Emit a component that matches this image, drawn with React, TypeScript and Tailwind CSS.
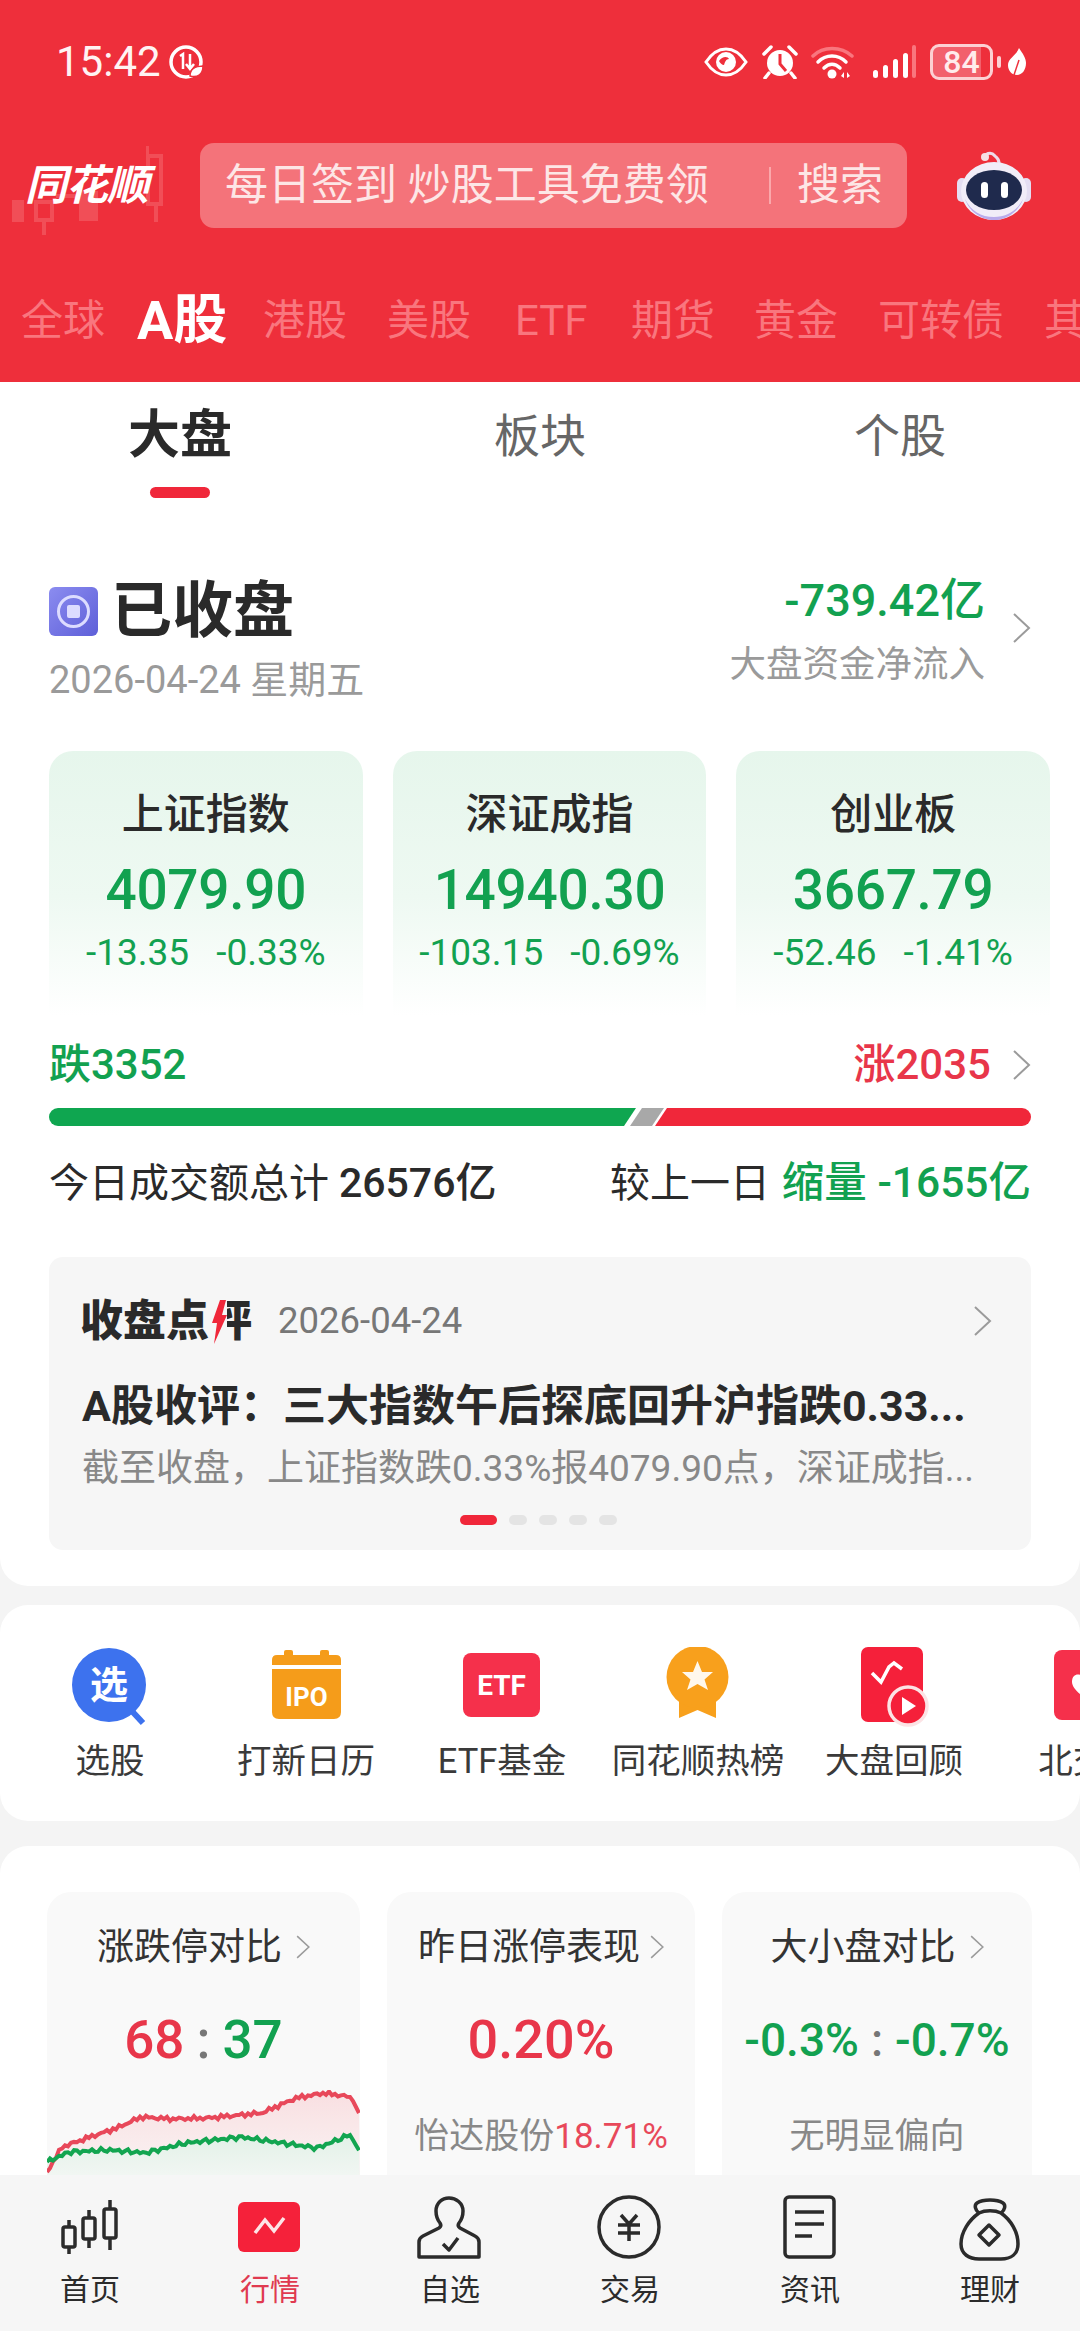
import React from "react";

const markets = [
  { label: "全球", cls: "w-[83px] mr-[33px]" },
  { label: "A股", cls: "w-[93px] mr-[33px] text-white font-bold text-[54px]" },
  { label: "港股", cls: "w-[84px] mr-[40px]" },
  { label: "美股", cls: "w-[83px] mr-[45px]" },
  { label: "ETF", cls: "w-[71px] mr-[45px]" },
  { label: "期货", cls: "w-[83px] mr-[40px]" },
  { label: "黄金", cls: "w-[84px] mr-[40px]" },
  { label: "可转债", cls: "w-[126px] mr-[40px]" },
  { label: "其他", cls: "w-[84px]" },
];

const indexes = [
  { name: "上证指数", value: "4079.90", diff: "-13.35", pct: "-0.33%" },
  { name: "深证成指", value: "14940.30", diff: "-103.15", pct: "-0.69%" },
  { name: "创业板", value: "3667.79", diff: "-52.46", pct: "-1.41%" },
];

const Chevron = ({ className }: { className: string }) => (
  <svg viewBox="0 0 18 30" className={className} fill="none" stroke="#9b9b9b" strokeWidth="2">
    <polyline points="1.500,1 16.500,15 1.500,29" />
  </svg>
);

const EyeIcon = () => (
  <svg viewBox="0 0 44 30" className="w-[44px] h-[30px]">
    <path d="M2 15 C10 3 17 2 22 2 C27 2 34 3 42 15 C34 27 27 28 22 28 C17 28 10 27 2 15 Z" fill="none" stroke="#fff" strokeWidth="3" />
    <circle cx="22" cy="15" r="10" fill="#fff" />
    <path d="M15 14 C18 9 24 9 25 12 C22 12 21 15 20 18 C18 18 16 16 15 14 Z" fill="#ee2f3b" />
  </svg>
);

const AlarmIcon = () => (
  <svg viewBox="0 0 36 34" className="w-[36px] h-[34px]">
    <circle cx="18" cy="18" r="13" fill="#fff" />
    <path d="M18 9 V19 L24 26" fill="none" stroke="#ee2f3b" strokeWidth="3" />
    <path d="M2 9 L9 2 M27 2 L34 9 M7 28 L3 33 M29 28 L33 33" stroke="#fff" strokeWidth="3.5" strokeLinecap="round" />
  </svg>
);

const WifiIcon = () => (
  <svg viewBox="0 0 44 34" className="w-[44px] h-[34px]" fill="none" strokeLinecap="round">
    <path d="M2 11 C12 1 30 1 41 11" stroke="#f9767e" strokeWidth="3.5" />
    <path d="M7 17 C15 9 27 9 35 17" stroke="#fff" strokeWidth="3.5" />
    <path d="M13 23 C18 18 24 18 29 23" stroke="#fff" strokeWidth="3.5" />
    <circle cx="21" cy="29" r="4.5" fill="#fff" />
    <path d="M30 31 L33 27 V33 Z M36 27 L39 31 L36 33 Z" fill="#fff" />
  </svg>
);

const SignalIcon = () => (
  <svg viewBox="0 0 44 34" className="w-[44px] h-[34px]">
    <rect x="0" y="25" width="5" height="8" rx="2.5" fill="#fff" />
    <rect x="10" y="20" width="5" height="13" rx="2.5" fill="#fff" />
    <rect x="20" y="14" width="5" height="19" rx="2.5" fill="#fff" />
    <rect x="30" y="8" width="5" height="25" rx="2.5" fill="#fff" />
    <rect x="39" y="0" width="4" height="33" rx="2" fill="#f9767e" />
  </svg>
);

const LeafIcon = () => (
  <svg viewBox="0 0 18 28" className="w-[18px] h-[28px]">
    <path d="M11 0 C15 6 18 10 18 15 C18 22 14 27 9 27 C4 27 0 23 0 17 C0 10 8 8 11 0 Z" fill="#fff" />
    <path d="M6 27 L11 12" stroke="#ee2f3b" strokeWidth="1.5" />
  </svg>
);

const RobotIcon = () => (
  <svg viewBox="0 0 74 70" className="w-[74px] h-[70px]">
    <path d="M28 9 C27 2 34 0 38 5 C40 7 42 8 42 12" fill="none" stroke="#eedcea" strokeWidth="3" />
    <circle cx="28" cy="6" r="4" fill="#f6dfe4" />
    <rect x="0" y="27" width="10" height="24" rx="5" fill="#e4def2" />
    <rect x="64" y="27" width="10" height="24" rx="5" fill="#e4def2" />
    <ellipse cx="37" cy="40" rx="33" ry="29" fill="#f1edf8" />
    <path d="M37 66 C50 66 60 60 66 48 C62 60 50 69 37 69 C24 69 12 60 8 48 C14 60 24 66 37 66 Z" fill="#b9abeb" />
    <ellipse cx="37" cy="39" rx="28" ry="20" fill="#1f2a4d" />
    <rect x="24" y="31" width="7" height="16" rx="3.5" fill="#fff" />
    <rect x="44" y="31" width="7" height="16" rx="3.5" fill="#fff" />
  </svg>
);

const shortcuts: { label: string; icon: React.ReactNode }[] = [
  {
    label: "选股",
    icon: (
      <>
        <path d="M60 62 L73 76" stroke="#3d72ee" strokeWidth="6" />
        <circle cx="39" cy="38" r="37" fill="#3d72ee" />
        <text x="39" y="51" textAnchor="middle" fontSize="38" fontWeight="700" fill="#fff">选</text>
      </>
    ),
  },
  {
    label: "打新日历",
    icon: (
      <>
        <rect x="18" y="3" width="9" height="10" rx="2" fill="#f59c1a" />
        <rect x="54" y="3" width="9" height="10" rx="2" fill="#f59c1a" />
        <path d="M6 18 V13 Q6 8 11 8 H70 Q75 8 75 13 V18 Z" fill="#f59c1a" />
        <path d="M6 22 H75 V65 Q75 72 68 72 H13 Q6 72 6 65 Z" fill="#f59c1a" />
        <text x="40.5" y="59" textAnchor="middle" fontSize="26" fontWeight="700" fill="#fff">IPO</text>
      </>
    ),
  },
  {
    label: "ETF基金",
    icon: (
      <>
        <rect x="1" y="6" width="77" height="64" rx="8" fill="#f5304b" />
        <text x="39.5" y="48" textAnchor="middle" fontSize="28" fontWeight="700" fill="#fff">ETF</text>
      </>
    ),
  },
  {
    label: "同花顺热榜",
    icon: (
      <>
        <path d="M21 48 V71 L39.5 63 L58 71 V48 Z" fill="#f8a01c" />
        <circle cx="39.5" cy="30" r="31" fill="#f8a01c" />
        <polygon
          points="39.5,14 44,25 55,25 46.500,32.500 50,43 39.500,37 29,43 32.500,32.500 24,25 35,25"
          fill="#fff8ec"
          strokeLinejoin="round"
        />
      </>
    ),
  },
  {
    label: "大盘回顾",
    icon: (
      <>
        <rect x="7" y="0" width="62" height="75" rx="7" fill="#f5203a" />
        <polyline points="18,26 27,35 35,20 40,16 48,22" fill="none" stroke="#fff" strokeWidth="3.5" />
        <circle cx="54" cy="59" r="19" fill="#f5203a" stroke="#fce3e5" strokeWidth="3.5" />
        <polygon points="48,50 48,68 62,59" fill="#fff" />
      </>
    ),
  },
  {
    label: "北交所",
    icon: (
      <>
        <rect x="4" y="3" width="72" height="70" rx="8" fill="#f5304b" />
        <path d="M22 35 C22 26 30 26 33 30 C36 26 44 26 44 35 C44 40 38 46 33 49 C28 46 22 40 22 35 Z" fill="#fff" />
      </>
    ),
  },
];

const navItems: { label: string; icon: React.ReactNode; active?: boolean }[] = [
  {
    label: "首页",
    icon: (
      <g fill="none" stroke="#2b2b2b" strokeWidth="3.500" strokeLinejoin="round">
        <rect x="8" y="35" width="12" height="20" rx="2" />
        <path d="M14 28 V35 M14 55 V62" />
        <rect x="28" y="26" width="12" height="21" rx="2" />
        <path d="M34 18 V26 M34 47 V56" />
        <rect x="49" y="17" width="12" height="29" rx="2" />
        <path d="M55 8 V17 M55 46 V58" />
      </g>
    ),
  },
  {
    label: "行情",
    active: true,
    icon: (
      <>
        <rect x="3" y="10" width="62" height="50" rx="6" fill="#f5213a" />
        <polyline points="20,41 30,28 39,39 49,26" fill="none" stroke="#fde4e6" strokeWidth="3.500" />
      </>
    ),
  },
  {
    label: "自选",
    icon: (
      <g fill="none" stroke="#2b2b2b" strokeWidth="3.500" strokeLinejoin="round">
        <path d="M4 65 V50 Q4 46 8 44 L24 36 Q27 34 25 31 Q21 26 21 19 C21 11 27 6 34 6 C41 6 48 11 48 19 Q48 26 44 31 Q42 34 45 36 L60 44 Q64 46 64 50 V65 Z" />
        <polyline points="28,52 34,58 43,46" />
      </g>
    ),
  },
  {
    label: "交易",
    icon: (
      <g fill="none" stroke="#2b2b2b" strokeWidth="3.500">
        <circle cx="34" cy="35" r="30" />
        <path d="M26 23 L34 32 L42 23 M23 33 H45 M23 41 H45 M34 32 V49" />
      </g>
    ),
  },
  {
    label: "资讯",
    icon: (
      <g fill="none" stroke="#2b2b2b" strokeWidth="3.500">
        <rect x="10" y="5" width="49" height="60" rx="4" />
        <path d="M20 20 H49 M20 32 H49 M20 44 H37" />
      </g>
    ),
  },
  {
    label: "理财",
    icon: (
      <g fill="none" stroke="#2b2b2b" strokeWidth="3.500" strokeLinejoin="round">
        <path d="M24 21 C20 18 19 13 22 11 C28 7 42 7 48 11 C51 13 50 18 46 21" />
        <path d="M24 21 C14 28 6 40 6 52 C6 62 14 67 24 67 H46 C56 67 63 62 63 52 C63 40 56 28 46 21 C40 18 30 18 24 21 Z" />
        <polygon points="34,33 44,43 34,53 24,43" />
      </g>
    ),
  },
];

const redAnchors = [
  [0, 82], [15, 57], [43, 47], [70, 38], [94, 27], [125, 29], [160, 28], [215, 23], [249, 8], [277, 3], [304, 7], [313, 25],
];
const greenAnchors = [
  [0, 72], [22, 62], [63, 60], [98, 63], [139, 53], [194, 47], [249, 55], [270, 58], [303, 45], [313, 62],
];

// interpolate the anchors and add a small fixed jitter so the line looks like a tick chart
const buildLine = (anchors: number[][], seed: number) => {
  const pts: string[] = [];
  for (let x = 0; x <= 313; x += 3) {
    let i = 0;
    while (i < anchors.length - 2 && anchors[i + 1][0] < x) i++;
    const [x0, y0] = anchors[i];
    const [x1, y1] = anchors[i + 1];
    const y = y0 + ((y1 - y0) * (x - x0)) / (x1 - x0);
    const jitter = x > 300 ? 0 : Math.sin(x * seed) * 1.6 + Math.sin(x * seed * 2.7) * 0.8;
    pts.push(`${x},${(y + jitter).toFixed(1)}`);
  }
  return pts.join(" ");
};

const MiniChart = () => {
  const red = buildLine(redAnchors, 0.93);
  const green = buildLine(greenAnchors, 1.37);
  return (
    <svg viewBox="0 0 313 100" className="w-[313px] h-[100px] block">
      <defs>
        <linearGradient id="redFill" x1="0" y1="0" x2="0" y2="1">
          <stop offset="0" stopColor="#f8c9cd" stopOpacity="0.55" />
          <stop offset="1" stopColor="#fbeeee" stopOpacity="0.4" />
        </linearGradient>
        <linearGradient id="greenFill" x1="0" y1="0" x2="0" y2="1">
          <stop offset="0" stopColor="#e2f1e7" />
          <stop offset="1" stopColor="#f7f8f7" />
        </linearGradient>
      </defs>
      <polygon points={`0,100 ${red} 313,100`} fill="url(#redFill)" />
      <polygon points={`0,100 ${green} 313,100`} fill="url(#greenFill)" />
      <polyline points={red} fill="none" stroke="#e8485a" strokeWidth="4" />
      <polyline points={green} fill="none" stroke="#12a550" strokeWidth="4" />
    </svg>
  );
};

export default function App() {
  return (
    <div className="w-[1080px] h-[2331px] overflow-hidden flex flex-col bg-[#f4f4f4] text-[#2a2a2a] font-[Roboto,'Noto_Sans_CJK_SC',sans-serif]">
      <header className="h-[382px] shrink-0 bg-[#ee2f3b] overflow-hidden">
        <div className="mt-[40px] h-[44px] pl-[56px] pr-[54px] flex items-center justify-between">
          <div className="flex items-center">
            <span className="text-[42px] leading-none text-[#fff3f3]">15:42</span>
            <svg viewBox="0 0 36 36" className="w-[36px] h-[36px] ml-[7px]">
              <circle cx="18" cy="18" r="15" fill="none" stroke="#fff" strokeWidth="3.500" />
              <path d="M12 12 L15 10 V25 M22 10 V24 M18 20 L22 25 L26 20" fill="none" stroke="#fff" strokeWidth="2.500" />
              <path d="M22 32 C22 25 28 22 35 22 C35 30 30 34 22 32 Z" fill="#fff" stroke="#ee2f3b" strokeWidth="1.500" />
            </svg>
          </div>
          <div className="flex items-center">
            <EyeIcon />
            <div className="ml-[14px]"><AlarmIcon /></div>
            <div className="ml-[13px]"><WifiIcon /></div>
            <div className="ml-[18px]"><SignalIcon /></div>
            <div className="ml-[13px] w-[63px] h-[36px] rounded-[9px] border-[3px] border-[#fcd0d3] bg-[linear-gradient(90deg,#f2606c_84%,transparent_84%)] flex items-center justify-center text-[32px] leading-none font-medium text-[#ffecec]">
              84
            </div>
            <div className="ml-[4px] w-[4px] h-[12px] rounded-[2px] bg-[#fcd0d3]" />
            <div className="ml-[7px]"><LeafIcon /></div>
          </div>
        </div>

        <div className="mt-[59px] h-[85px] flex items-center">
          <div className="relative w-[200px] h-[85px] shrink-0 flex items-center">
            <svg viewBox="0 0 170 105" className="absolute left-[10px] top-[-5px] w-[170px] h-[105px]">
              <g fill="#f14e57">
                <rect x="2" y="62" width="12" height="22" />
                <path d="M24 62 H44 V84 H36 V97 H32 V84 H24 Z M28 66 V80 H40 V66 Z" />
                <rect x="46" y="56" width="20" height="4" />
                <rect x="69" y="53" width="19" height="30" />
                <path d="M136 8 H139 V16 H153 V68 H148 V84 H144 V68 H136 Z M140 20 V64 H149 V20 Z" />
              </g>
            </svg>
            <span className="relative ml-[25px] text-[42px] leading-none font-bold italic text-[#fff] tracking-[-1px]">同花顺</span>
          </div>
          <div className="w-[707px] h-[85px] shrink-0 rounded-[14px] bg-[#f4737a] flex items-center text-[#fde6e6]">
            <span className="ml-[25px] w-[544px] text-[43px] leading-none whitespace-nowrap">每日签到 炒股工具免费领</span>
            <div className="w-[2px] h-[37px] bg-[#fba8ab]" />
            <span className="ml-[26px] text-[43px] leading-none whitespace-nowrap">搜索</span>
          </div>
          <div className="ml-[50px]"><RobotIcon /></div>
        </div>

        <div className="mt-[63px] h-[60px] pl-[21px] flex items-center whitespace-nowrap text-[42px] leading-none text-[#f9767e]">
          {markets.map((m) => (
            <span key={m.label} className={`shrink-0 ${m.cls}`}>
              {m.label}
            </span>
          ))}
        </div>
      </header>

      <main className="flex-1 min-h-0 overflow-hidden">
        <section className="bg-white rounded-b-[28px] pb-[36px]">
          <div className="grid grid-cols-3 pt-[24px]">
            <div className="flex flex-col items-center">
              <span className="h-[60px] flex items-center text-[52px] leading-none font-bold">大盘</span>
              <div className="mt-[21px] w-[60px] h-[11px] rounded-full bg-[#f0273a]" />
            </div>
            <div className="flex justify-center">
              <span className="h-[60px] flex items-center text-[46px] leading-none text-[#666]">板块</span>
            </div>
            <div className="flex justify-center">
              <span className="h-[60px] flex items-center text-[46px] leading-none text-[#666]">个股</span>
            </div>
          </div>

          <div className="mt-[72px] px-[49px] flex justify-between">
            <div>
              <div className="h-[82px] flex items-center">
                <svg viewBox="0 0 49 49" className="w-[49px] h-[49px]">
                  <defs>
                    <linearGradient id="closedBg" x1="0" y1="0" x2="1" y2="1">
                      <stop offset="0" stopColor="#8b8cf0" />
                      <stop offset="1" stopColor="#5e5fd8" />
                    </linearGradient>
                  </defs>
                  <rect width="49" height="49" rx="6" fill="url(#closedBg)" />
                  <circle cx="24.500" cy="24.500" r="15" fill="none" stroke="#dcdcff" strokeWidth="3" />
                  <rect x="18" y="18" width="13" height="13" rx="2" fill="#dcdcff" />
                </svg>
                <span className="ml-[13px] text-[61px] leading-none font-bold">已收盘</span>
              </div>
              <div className="h-[56px] flex items-center text-[38px] leading-none text-[#9a9a9a]">2026-04-24 星期五</div>
            </div>
            <div className="flex items-start">
              <div className="flex flex-col items-end">
                <span className="h-[60px] flex items-center text-[45px] leading-none font-medium text-[#12a150]">-739.42亿</span>
                <span className="h-[70px] flex items-center text-[36.500px] leading-none text-[#9a9a9a]">大盘资金净流入</span>
              </div>
              <Chevron className="ml-[27px] mt-[43px] w-[19px] h-[30px]" />
            </div>
          </div>

          <div className="mt-[43px] pl-[49px] pr-[30px] grid grid-cols-3 gap-x-[30px]">
            {indexes.map((item) => (
              <div
                key={item.name}
                className="h-[265px] pt-[34px] rounded-t-[24px] bg-[linear-gradient(180deg,#e6f6ec_0%,#eef9f2_55%,#ffffff_100%)] flex flex-col items-center"
              >
                <span className="h-[60px] flex items-center text-[42px] leading-none font-medium">{item.name}</span>
                <span className="mt-[10px] h-[70px] flex items-center text-[55px] leading-none font-medium text-[#12a150] tracking-[-0.3px]">
                  {item.value}
                </span>
                <div className="mt-[5px] h-[44px] flex items-center gap-x-[27px] text-[37px] leading-none text-[#12a150]">
                  <span>{item.diff}</span>
                  <span>{item.pct}</span>
                </div>
              </div>
            ))}
          </div>

          <div className="mt-[19px] h-[60px] px-[49px] flex items-center justify-between text-[42px] leading-none font-medium">
            <span className="text-[#12a150]">跌3352</span>
            <div className="flex items-center">
              <span className="text-[#e8364a]">涨2035</span>
              <Chevron className="ml-[21px] w-[19px] h-[30px]" />
            </div>
          </div>

          <div className="mt-[13px] mx-[49px] h-[18px] flex">
            <div className="w-[587px] rounded-l-[9px] bg-[#0fa650] [clip-path:polygon(0_0,100%_0,calc(100%-12px)_100%,0_100%)]" />
            <div className="w-[34px] -ml-[6px] bg-[#a8a8a8] [clip-path:polygon(12px_0,100%_0,calc(100%-12px)_100%,0_100%)]" />
            <div className="flex-1 -ml-[9px] rounded-r-[9px] bg-[#f0273a] [clip-path:polygon(12px_0,100%_0,100%_100%,0_100%)]" />
          </div>

          <div className="mt-[27px] h-[60px] px-[49px] flex items-center justify-between text-[40px] leading-none">
            <div>
              今日成交额总计 <span className="text-[41px] font-medium">26576亿</span>
            </div>
            <div>
              较上一日 <span className="ml-[2px] text-[42.500px] font-medium text-[#12a150]">缩量 -1655亿</span>
            </div>
          </div>

          <div className="mt-[44px] mx-[49px] h-[293px] pt-[34px] px-[33px] rounded-[14px] bg-[#f6f6f6]">
            <div className="h-[60px] flex items-center">
              <span className="text-[43px] leading-none font-black whitespace-nowrap -ml-[2px]">
                收盘点
                <span className="relative inline-block">
                  评
                  <svg viewBox="0 0 18 46" className="absolute left-0 top-[-1px] w-[18px] h-[46px]">
                    <rect width="18" height="46" fill="#f6f6f6" />
                    <polygon points="11,1 17,1 13,16 18,16 5,45 8,24 3,24" fill="#f0273a" />
                  </svg>
                </span>
              </span>
              <span className="ml-[26px] text-[36.500px] leading-none text-[#777]">2026-04-24</span>
              <Chevron className="ml-auto mr-[6px] w-[19px] h-[30px]" />
            </div>
            <div className="mt-[27px] h-[56px] flex items-center text-[43px] leading-none font-bold whitespace-nowrap">
              A股收评：三大指数午后探底回升沪指跌0.33...
            </div>
            <div className="mt-[9px] h-[50px] flex items-center text-[37px] leading-none text-[#888] whitespace-nowrap">
              截至收盘，上证指数跌0.33%报4079.90点，深证成指...
            </div>
            <div className="mt-[22px] mr-[3px] h-[10px] flex justify-center items-center gap-x-[12px]">
              <div className="w-[37px] h-[10px] rounded-full bg-[#f0273a]" />
              <div className="w-[18px] h-[10px] rounded-full bg-[#e4e4e4]" />
              <div className="w-[18px] h-[10px] rounded-full bg-[#e4e4e4]" />
              <div className="w-[18px] h-[10px] rounded-full bg-[#e4e4e4]" />
              <div className="w-[18px] h-[10px] rounded-full bg-[#e4e4e4]" />
            </div>
          </div>
        </section>

        <section className="mt-[19px] h-[216px] bg-white rounded-[28px] pt-[42px] pl-[12px] flex overflow-hidden">
          {shortcuts.map((s) => (
            <div key={s.label} className="w-[196px] shrink-0 flex flex-col items-center">
              <svg viewBox="0 0 80 80" className="w-[80px] h-[80px]">
                {s.icon}
              </svg>
              <span className="mt-[9px] h-[50px] flex items-center text-[34.500px] leading-none text-[#3a3a3a] whitespace-nowrap">
                {s.label}
              </span>
            </div>
          ))}
        </section>

        <section className="mt-[25px] h-[400px] bg-white rounded-t-[28px] pt-[46px] pl-[47px] grid grid-cols-[313px_308px_310px] gap-x-[27px]">
          <div className="rounded-t-[24px] bg-[#f9f9f9] pt-[30px] overflow-hidden flex flex-col items-center">
            <div className="h-[50px] flex items-center text-[37px] leading-none text-[#333]">
              涨跌停对比
              <Chevron className="ml-[14px] w-[14px] h-[26px]" />
            </div>
            <div className="mt-[33px] h-[70px] flex items-center text-[53px] leading-none font-medium">
              <span className="text-[#e8364a]">68</span>
              <span className="mx-[12px] text-[#777]">:</span>
              <span className="text-[#12a150]">37</span>
            </div>
            <div className="mt-[15px]"><MiniChart /></div>
          </div>

          <div className="rounded-t-[24px] bg-[#f9f9f9] pt-[30px] flex flex-col items-center">
            <div className="h-[50px] flex items-center text-[37px] leading-none text-[#333]">
              昨日涨停表现
              <Chevron className="ml-[10px] w-[14px] h-[26px]" />
            </div>
            <div className="mt-[33px] h-[70px] flex items-center text-[54px] leading-none font-medium text-[#e8364a]">0.20%</div>
            <div className="mt-[36px] h-[50px] flex items-center text-[35px] leading-none text-[#888] whitespace-nowrap">
              怡达股份<span className="text-[#e8485a]">18.71%</span>
            </div>
          </div>

          <div className="rounded-t-[24px] bg-[#f9f9f9] pt-[30px] flex flex-col items-center">
            <div className="h-[50px] flex items-center text-[37px] leading-none text-[#333]">
              大小盘对比
              <Chevron className="ml-[14px] w-[14px] h-[26px]" />
            </div>
            <div className="mt-[33px] h-[70px] flex items-center text-[46px] leading-none font-medium text-[#12a150] whitespace-nowrap">
              -0.3%<span className="mx-[12px] text-[#777]">:</span>-0.7%
            </div>
            <div className="mt-[36px] h-[50px] flex items-center text-[35px] leading-none text-[#888]">无明显偏向</div>
          </div>
        </section>
      </main>

      <nav className="h-[156px] shrink-0 bg-[#f6f6f6] pt-[17px] grid grid-cols-6">
        {navItems.map((n) => (
          <div key={n.label} className="flex flex-col items-center">
            <svg viewBox="0 0 70 70" className="w-[70px] h-[70px]">
              {n.icon}
            </svg>
            <span
              className={`mt-[8px] h-[40px] flex items-center text-[30px] leading-none ${n.active ? "text-[#e03a50]" : "text-[#2b2b2b]"}`}
            >
              {n.label}
            </span>
          </div>
        ))}
      </nav>
    </div>
  );
}
